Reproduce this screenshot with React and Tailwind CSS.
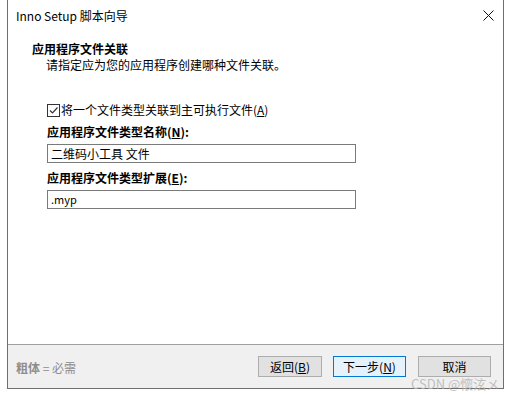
const font = { fontFamily: '"Noto Sans CJK SC", "Liberation Sans", sans-serif' };

const Checkbox = () => (
  <span className="flex h-[13px] w-[13px] items-center justify-center border border-[#333] bg-white">
    <svg width="11" height="11" viewBox="0 0 11 11">
      <path d="M2 5.5 L4.5 8 L9.5 2.5" fill="none" stroke="#333" strokeWidth="1.2" />
    </svg>
  </span>
);

const Btn = ({ children, primary, className = "" }) => (
  <div
    className={`flex h-[21px] items-center justify-center border text-[12px] leading-none text-black ${
      primary ? "border-[#0078d7] bg-[#e5f1fb]" : "border-[#adadad] bg-[#e1e1e1]"
    } ${className}`}
  >
    {children}
  </div>
);

export default function App() {
  return (
    <div className="relative h-[397px] w-[511px] overflow-hidden bg-white" style={font}>
      <div className="ml-[7px] flex h-[389px] w-[497px] flex-col border-x border-b border-[#6f6f6f] bg-white">
        {/* title bar */}
        <div className="flex h-[31px] items-center justify-between pl-2 pr-[9px]">
          <span className="text-[12px] text-black">Inno Setup 脚本向导</span>
          <svg width="11" height="11" viewBox="0 0 11 11">
            <path d="M0.5 0.5 L10.5 10.5 M10.5 0.5 L0.5 10.5" stroke="#111" strokeWidth="1" />
          </svg>
        </div>

        {/* body */}
        <div className="flex-1">
          <div className="mt-[10px] pl-[24px] text-[12px] font-bold leading-[16px] text-black">
            应用程序文件关联
          </div>
          <div className="pl-[38px] text-[12px] leading-[16px] text-black">
            请指定应为您的应用程序创建哪种文件关联。
          </div>

          <div className="mt-[29px] pl-[39px]">
            <div className="flex items-center gap-[1px] text-[12px] leading-[16px] text-black">
              <Checkbox />
              <span>将一个文件类型关联到主可执行文件(<span className="underline">A</span>)</span>
            </div>
            <div className="mt-[6px] text-[12px] font-bold leading-[16px] text-black">
              应用程序文件类型名称(<span className="underline">N</span>):
            </div>
            <div className="mt-[4px] flex h-[19px] w-[309px] items-center border border-[#7a7a7a] px-[3px] text-[12px] text-black">
              二维码小工具 文件
            </div>
            <div className="mt-[7px] text-[12px] font-bold leading-[16px] text-black">
              应用程序文件类型扩展(<span className="underline">E</span>):
            </div>
            <div className="mt-[4px] flex h-[19px] w-[309px] items-center border border-[#7a7a7a] px-[3px] text-[11px] text-black">
              .myp
            </div>
          </div>
        </div>

        {/* footer */}
        <div className="flex h-[44px] items-center justify-between border-t border-[#a0a0a0] bg-[#f0f0f0] pl-2 pr-[12px]">
          <span className="mt-[3px] text-[12px] text-[#8d8d8d]">
            <span className="font-bold">粗体</span> = 必需
          </span>
          <div className="flex items-center">
            <Btn className="w-[64px]">返回(<span className="underline">B</span>)</Btn>
            <Btn primary className="ml-[11px] w-[73px]">下一步(<span className="underline">N</span>)</Btn>
            <Btn className="ml-[12px] w-[73px]">取消</Btn>
          </div>
        </div>
      </div>

      {/* watermark */}
      <div className="absolute left-[411px] top-[377px] text-[13px] leading-none text-[#b4b4b4] opacity-80">
        CSDN @懷泫メ
      </div>
    </div>
  );
}
